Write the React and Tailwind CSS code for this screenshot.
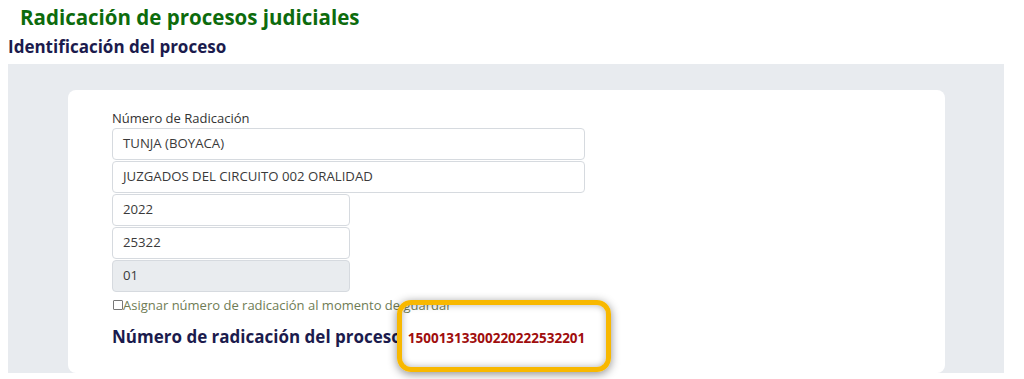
const Campo = ({ value, ancho, gris }) => (
  <div
    className={`h-[32px] mb-[1px] flex items-center pl-[10px] border border-[#d6dadf] rounded-[4px] text-[13.2px] text-[#3a3a3a] ${ancho} ${
      gris ? "bg-[#e9ecef]" : "bg-white"
    }`}
  >
    {value}
  </div>
);

const App = () => {
  return (
    <div className="relative w-[1024px] h-[379px] overflow-hidden bg-white font-['Open_Sans',sans-serif]">
      <h1 className="pl-[20px] pt-[3px] text-[20.5px] leading-[28px] font-bold text-[#0d6b0d]">
        Radicación de procesos judiciales
      </h1>
      <h2 className="pl-[8px] mt-[4px] text-[17px] leading-[24px] font-bold text-[#1b1b4d]">
        Identificación del proceso
      </h2>
      <div className="ml-[8px] mt-[5px] w-[996px] h-[309px] bg-[#e8ebef] pt-[26px] pl-[60px]">
        <div className="w-[877px] h-[283px] bg-white rounded-[8px] pt-[18px] pl-[44px]">
          <label className="block text-[13px] leading-[20px] text-[#333]">
            Número de Radicación
          </label>
          <Campo value="TUNJA (BOYACA)" ancho="w-[473px]" />
          <Campo value="JUZGADOS DEL CIRCUITO 002 ORALIDAD" ancho="w-[473px]" />
          <Campo value="2022" ancho="w-[238px]" />
          <Campo value="25322" ancho="w-[238px]" />
          <Campo value="01" ancho="w-[238px]" gris />
          <div className="flex items-center mt-[4px] text-[13px] leading-[18px] text-[#6f7c55]">
            <span className="inline-block w-[10px] h-[10px] border border-[#777] rounded-[1px] ml-[1px]"></span>
            <span>Asignar número de radicación al momento de guardar</span>
          </div>
          <div className="flex items-baseline mt-[11px]">
            <span className="text-[17px] leading-[24px] font-bold text-[#1b1b4d]">
              Número de radicación del proceso
            </span>
            <span className="ml-[6px] text-[13.5px] font-bold text-[#a00d0d]">
              15001313300220222532201
            </span>
          </div>
        </div>
      </div>
      <div className="absolute left-[397px] top-[300px] w-[214px] h-[72px] rounded-[14px] border-[5px] border-[#f8b800] shadow-[0_2px_10px_rgba(0,0,0,0.45),inset_0_0_7px_rgba(0,0,0,0.3)]"></div>
    </div>
  );
};

export default App;
